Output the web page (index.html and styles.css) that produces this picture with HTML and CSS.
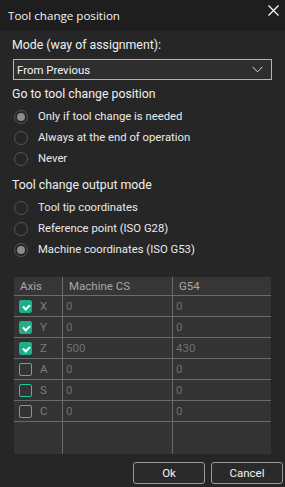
FILE: index.html
```html
<!DOCTYPE html>
<html>
<head>
  <meta charset="utf-8" />
  <title>Tool change position</title>
  <link rel="stylesheet" href="styles.css">
</head>
<body>
<div class="dialog">
  <div class="titleBar">
    <span class="title">Tool change position</span>
    <svg class="close" width="11" height="11" viewBox="0 0 11 11"><path d="M0.5 0.5L10.5 10.5M10.5 0.5L0.5 10.5" stroke="#fff" stroke-width="1.2" fill="none"/></svg>
  </div>
  <div class="content">
    <div class="label">Mode (way of assignment):</div>
    <div class="select">
      <span>From Previous</span>
      <svg width="11" height="7" viewBox="0 0 11 7"><path d="M0.5 0.8L5.5 5.8L10.5 0.8" stroke="#ddd" stroke-width="1" fill="none"/></svg>
    </div>

    <div class="heading">Go to tool change position</div>
    <div class="radioGroup">
      <div class="radioRow"><span class="radio checked"></span>Only if tool change is needed</div>
      <div class="radioRow"><span class="radio"></span>Always at the end of operation</div>
      <div class="radioRow"><span class="radio"></span>Never</div>
    </div>

    <div class="heading second">Tool change output mode</div>
    <div class="radioGroup">
      <div class="radioRow"><span class="radio"></span>Tool tip coordinates</div>
      <div class="radioRow"><span class="radio"></span>Reference point (ISO G28)</div>
      <div class="radioRow"><span class="radio checked"></span>Machine coordinates (ISO G53)</div>
    </div>

    <div class="grid">
      <div class="gridRow header">
        <div class="cell axis">Axis</div>
        <div class="cell">Machine CS</div>
        <div class="cell">G54</div>
      </div>
      <div class="gridRow">
        <div class="cell axis"><span class="check on"></span>X</div>
        <div class="cell">0</div>
        <div class="cell">0</div>
      </div>
      <div class="gridRow">
        <div class="cell axis"><span class="check on"></span>Y</div>
        <div class="cell">0</div>
        <div class="cell">0</div>
      </div>
      <div class="gridRow">
        <div class="cell axis"><span class="check on"></span>Z</div>
        <div class="cell">500</div>
        <div class="cell">430</div>
      </div>
      <div class="gridRow">
        <div class="cell axis"><span class="check"></span>A</div>
        <div class="cell">0</div>
        <div class="cell">0</div>
      </div>
      <div class="gridRow">
        <div class="cell axis"><span class="check"></span>S</div>
        <div class="cell">0</div>
        <div class="cell">0</div>
      </div>
      <div class="gridRow">
        <div class="cell axis"><span class="check"></span>C</div>
        <div class="cell">0</div>
        <div class="cell">0</div>
      </div>
      <div class="gridRow filler">
        <div class="cell axis"></div>
        <div class="cell"></div>
        <div class="cell"></div>
      </div>
    </div>

    <div class="buttons">
      <button class="btn">Ok</button>
      <button class="btn">Cancel</button>
    </div>
  </div>
</div>
</body>
</html>
```
FILE: styles.css
```css
* { margin: 0; padding: 0; box-sizing: border-box; }
body { background: #252526; font-family: Roboto, "Liberation Sans", sans-serif; color: #e6e6e6; }
.dialog { width: 285px; height: 487px; background: #262626; display: flex; flex-direction: column; }
.titleBar { height: 31px; background: #1e1e1e; display: flex; align-items: center; justify-content: space-between; padding: 0 6px 0 8px; }
.title { font-family: "Open Sans", "Noto Sans", sans-serif; font-size: 11.6px; color: #f4f4f4; }
.close { align-self: flex-start; margin-top: 5px; }
.content { padding: 5px 12px 0 12px; display: flex; flex-direction: column; }
.label { font-size: 12.3px; line-height: 18px; color: #f0f0f0; }
.select { margin: 5px 1px 0 1px; height: 21px; border: 1px solid #b4b4b4; background: #2e2e2e; display: flex; align-items: center; justify-content: space-between; padding: 0 8px 0 3px; font-size: 11.4px; color: #f4f4f4; }
.heading { margin-top: 5px; font-size: 12.3px; line-height: 18px; color: #f0f0f0; }
.heading.second { margin-top: 7px; }
.radioGroup { display: flex; flex-direction: column; padding-top: 3px; }
.radioRow { height: 21px; display: flex; align-items: center; font-size: 11.3px; color: #eaeaea; }
.radio { width: 14px; height: 14px; border: 1px solid #555555; border-radius: 50%; margin: 0 10px 0 2px; background: #262626; display: flex; align-items: center; justify-content: center; }
.radio.checked::after { content: ""; width: 8px; height: 8px; border-radius: 50%; background: #8c8c8c; }
.grid { margin: 17px 2px 0 2px; background: #333333; display: flex; flex-direction: column; }
.gridRow { display: grid; grid-template-columns: 49px 110px 1fr; height: 21px; border-top: 1px solid #6b6b6b; }
.gridRow.header { height: 18px; border-top: none; background: #363636; }
.gridRow.header .cell { color: #a8a8a8; padding-left: 6px; }
.gridRow.header .cell.axis { padding-left: 6px; }
.gridRow.filler { height: 33px; }
.cell { border-right: 1px solid #6b6b6b; display: flex; align-items: center; padding-left: 3px; font-size: 11.5px; color: #707070; }
.cell:last-child { border-right: none; }
.cell.axis { padding-left: 5px; color: #7c7c7c; }
.check { width: 13px; height: 13px; border: 1px solid #24c89e; border-radius: 2px; margin-right: 8px; position: relative; }
.check.on { background: #1fae8a; border-color: #1fae8a; }
.check.on::after { content: ""; position: absolute; left: 3px; top: 3px; width: 5px; height: 3px; border-left: 2px solid #fff; border-bottom: 2px solid #fff; transform: rotate(-45deg); }
.buttons { display: flex; justify-content: flex-end; gap: 6px; margin: 8px -10px 0 0; }
.btn { width: 72px; height: 22px; border: 1px solid #9a9a9a; border-radius: 3px; background: #2a2a2a; color: #f4f4f4; font-family: Roboto, "Liberation Sans", sans-serif; font-size: 11.5px; }
```
